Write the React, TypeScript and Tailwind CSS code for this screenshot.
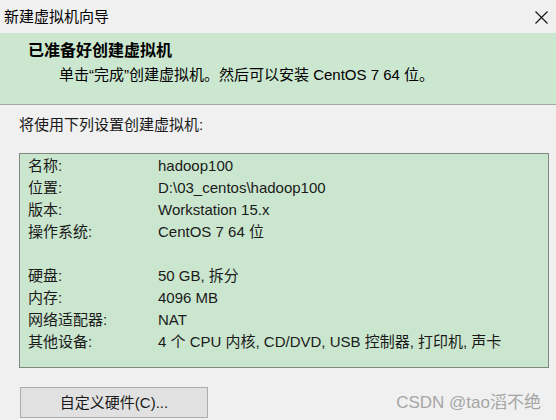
import React from "react";

const rows1: [string, string][] = [
  ["名称:", "hadoop100"],
  ["位置:", "D:\\03_centos\\hadoop100"],
  ["版本:", "Workstation 15.x"],
  ["操作系统:", "CentOS 7 64 位"],
];
const rows2: [string, string][] = [
  ["硬盘:", "50 GB, 拆分"],
  ["内存:", "4096 MB"],
  ["网络适配器:", "NAT"],
  ["其他设备:", "4 个 CPU 内核, CD/DVD, USB 控制器, 打印机, 声卡"],
];

function Row({ label, value }: { label: string; value: string }) {
  return (
    <div className="flex h-[22px] items-center leading-[22px]">
      <div className="w-[130px] shrink-0">{label}</div>
      <div className="whitespace-nowrap">{value}</div>
    </div>
  );
}

export default function App() {
  return (
    <div
      className="relative w-[556px] h-[420px] overflow-hidden bg-[#f0f0f0] text-[15px] text-[#1a1a1a]"
      style={{ fontFamily: '"Liberation Sans", "Noto Sans CJK SC", sans-serif' }}
    >
      {/* title bar */}
      <div className="flex h-[33px] items-center justify-between pl-[4px] pr-[8px] bg-[#f0f0f0]">
        <span className="text-[15px] leading-[20px] text-black">新建虚拟机向导</span>
        <svg width="13" height="13" viewBox="0 0 13 13" className="mt-[1px]">
          <path d="M0.5 0.5 L12.5 12.5 M12.5 0.5 L0.5 12.5" stroke="#111" strokeWidth="1.1" fill="none" />
        </svg>
      </div>

      {/* header */}
      <div className="h-[72px] bg-[#cce7cf] border-b border-[#a3aaa4] pt-[8px]">
        <div className="pl-[28px] text-[16px] font-bold leading-[20px] text-black">已准备好创建虚拟机</div>
        <div className="mt-[4px] pl-[59px] leading-[20px] text-black">
          单击“完成”创建虚拟机。然后可以安装 CentOS 7 64 位。
        </div>
      </div>

      <div className="mt-[10px] pl-[19px] leading-[20px]">将使用下列设置创建虚拟机:</div>

      {/* settings box */}
      <div className="ml-[19px] mt-[18px] w-[530px] h-[215px] border border-[#7e8a7f] bg-[#cbe6ce] pl-[8px] pt-[1px]">
        {rows1.map(([l, v]) => (
          <Row key={l} label={l} value={v} />
        ))}
        <div className="h-[22px]" />
        {rows2.map(([l, v]) => (
          <Row key={l} label={l} value={v} />
        ))}
      </div>

      <div className="ml-[20px] mt-[19px] flex h-[31px] w-[188px] items-center justify-center border border-[#adadad] bg-[#e1e1e1] leading-[20px]">
        自定义硬件(C)...
      </div>

      <div className="absolute right-[15px] top-[392px] text-[17px] leading-[22px] text-[#a6a6a6]">
        CSDN @tao滔不绝
      </div>
    </div>
  );
}
